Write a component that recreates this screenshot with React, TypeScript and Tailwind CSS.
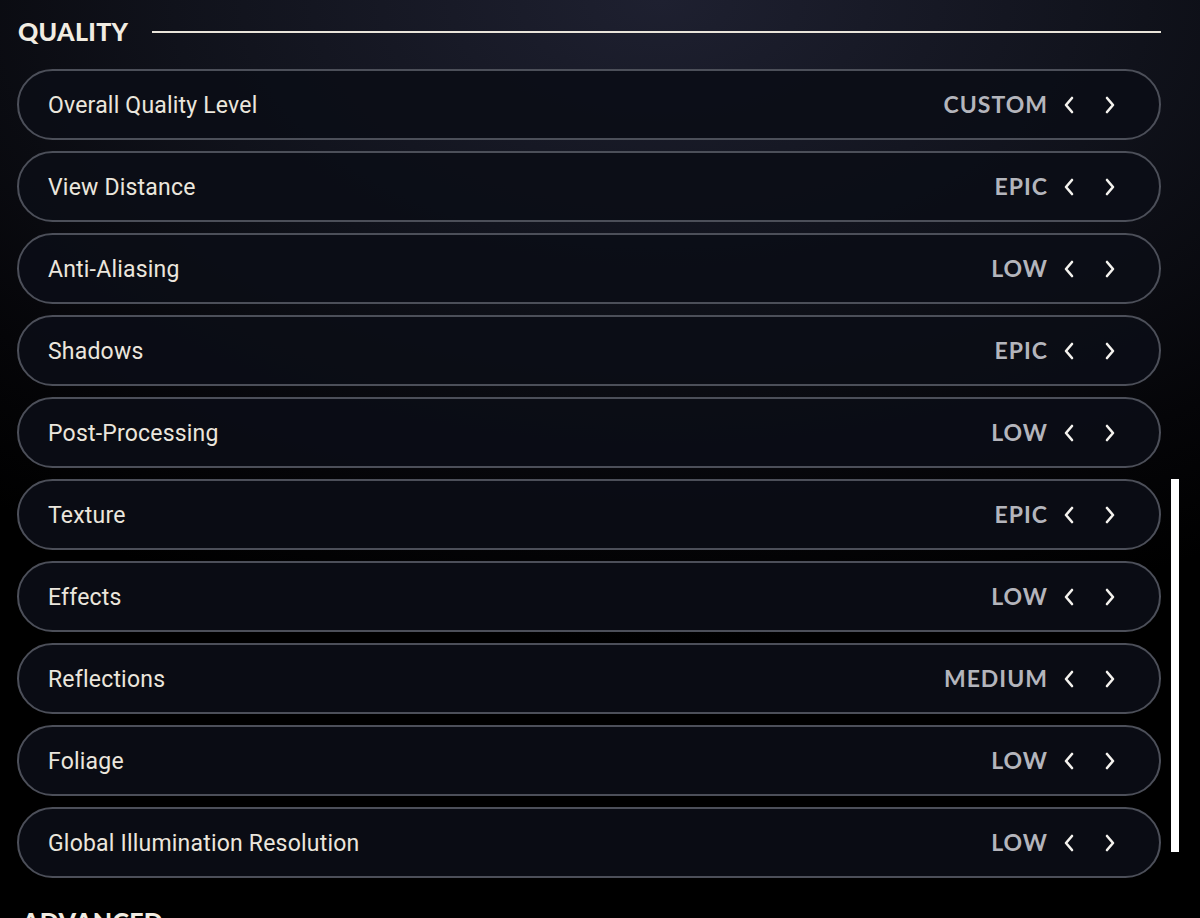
const rows: { label: string; value: string }[] = [
  { label: "Overall Quality Level", value: "CUSTOM" },
  { label: "View Distance", value: "EPIC" },
  { label: "Anti-Aliasing", value: "LOW" },
  { label: "Shadows", value: "EPIC" },
  { label: "Post-Processing", value: "LOW" },
  { label: "Texture", value: "EPIC" },
  { label: "Effects", value: "LOW" },
  { label: "Reflections", value: "MEDIUM" },
  { label: "Foliage", value: "LOW" },
  { label: "Global Illumination Resolution", value: "LOW" },
];

function Chevron({ dir }: { dir: "left" | "right" }) {
  return (
    <svg width="14" height="18" viewBox="0 0 14 18" fill="none" className="block">
      <path
        d={dir === "left" ? "M10 2 L4 9 L10 16" : "M4 2 L10 9 L4 16"}
        stroke="#f4f2ee"
        strokeWidth="2.6"
        strokeLinecap="round"
        strokeLinejoin="round"
      />
    </svg>
  );
}

function SettingRow({ label, value }: { label: string; value: string }) {
  return (
    <div className="flex h-[71px] items-center rounded-full border-2 border-[#4c4f59] bg-[#0b0d16]/90 pl-[29px] pr-[42px]">
      <span className="flex-1 pt-[3px] font-['Roboto',sans-serif] text-[23px] tracking-[0.2px] text-[#ebe6dd]">
        {label}
      </span>
      <span className="font-['Lato',sans-serif] text-[23px] font-bold tracking-[1px] text-[#b4b5bc]">
        {value}
      </span>
      <div className="ml-[14px] flex items-center gap-[27px]">
        <Chevron dir="left" />
        <Chevron dir="right" />
      </div>
    </div>
  );
}

export default function App() {
  return (
    <div className="h-[918px] w-[1200px] overflow-hidden bg-[radial-gradient(ellipse_90%_70%_at_55%_0%,#1e2030_0%,#10121b_45%,#050508_80%,#000_100%)]">
      <div className="flex pl-[17px] pr-[21px]">
        {/* settings column */}
        <div className="flex w-[1144px] flex-col">
          <div className="flex h-[64px] items-center">
            <h2 className="pl-[1px] font-['Lato',sans-serif] text-[25px] font-black tracking-[0.3px] text-[#f1ece2]">
              QUALITY
            </h2>
            <div className="ml-[24px] h-[1.5px] flex-1 bg-[#e9e4da]" />
          </div>
          <div className="mt-[5px] flex flex-col gap-[11px]">
            {rows.map((r) => (
              <SettingRow key={r.label} label={r.label} value={r.value} />
            ))}
          </div>
          <h2 className="mt-[25px] pl-[5px] font-['Lato',sans-serif] text-[25px] font-black tracking-[0.3px] text-[#f1ece2]">
            ADVANCED
          </h2>
        </div>

        {/* scroll track */}
        <div className="ml-[10px] w-[8px]">
          <div className="mt-[479px] h-[373px] w-[8px] bg-white" />
        </div>
      </div>
    </div>
  );
}
